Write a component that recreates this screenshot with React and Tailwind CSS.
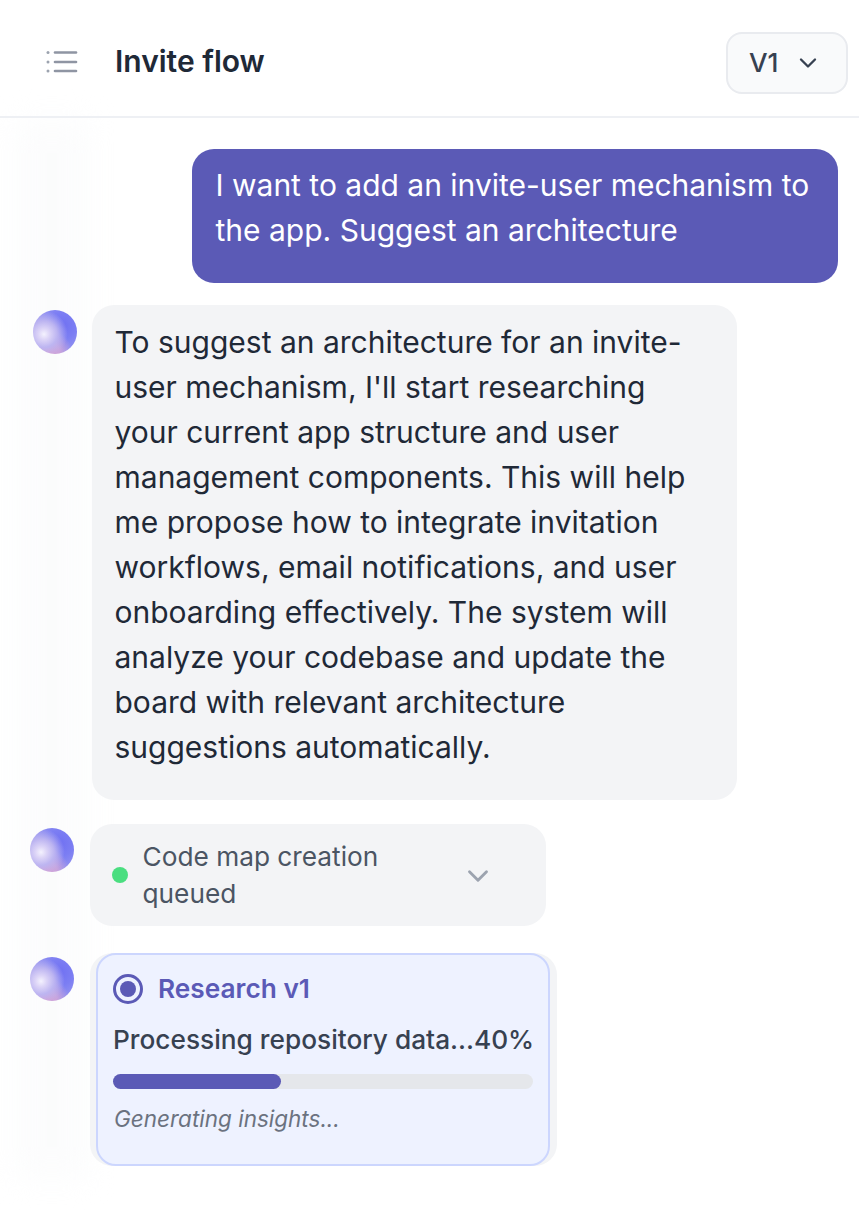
import { ChevronDown } from "lucide-react";

function Orb({ className = "" }) {
  return (
    <div
      className={`w-[44px] h-[44px] shrink-0 rounded-full bg-[radial-gradient(circle_at_25%_55%,#f4f2fe_0%,#dcd4f7_14%,#bdb5f1_32%,transparent_58%),radial-gradient(circle_at_35%_100%,#d99fd0_0%,#c9a4dc_22%,transparent_46%),radial-gradient(circle_at_68%_35%,#7071f2_0%,#7c7ef3_32%,#9292f0_62%,#ada4ea_100%)] ${className}`}
    />
  );
}

export default function App() {
  return (
    <div className="relative w-[859px] h-[1210px] bg-white overflow-hidden text-[#1f2937] font-['Inter',sans-serif]">
      <div className="absolute left-[14px] top-[120px] w-[76px] h-[1060px] bg-[#f9fafb] opacity-50 blur-[14px]" />

      <div className="relative flex items-center h-[118px] pt-[8px] pl-[46px] pr-[11px] border-b-2 border-[#eef0f4]">
        <svg width="32" height="24" viewBox="0 0 32 24" fill="none" className="shrink-0">
          <g fill="#9ca3af">
            <circle cx="2" cy="2.5" r="1.5" />
            <circle cx="2" cy="12" r="1.5" />
            <circle cx="2" cy="21" r="1.5" />
          </g>
          <g stroke="#8f95a3" strokeWidth="2.6" strokeLinecap="round">
            <path d="M9 2.5H30" />
            <path d="M9 12H30" />
            <path d="M9 21H30" />
          </g>
        </svg>
        <h1 className="ml-[37px] mb-[2px] text-[30px] font-semibold">Invite flow</h1>
        <button className="ml-auto mt-[2px] flex items-center w-[122px] h-[62px] pl-[21px] rounded-[16px] border-2 border-[#e9ebef] bg-[#f9fafb] text-[#374151] text-[26.25px] font-medium">
          V1
          <ChevronDown className="ml-[15px] text-[#374151]" size={28} strokeWidth={2} />
        </button>
      </div>

      <div className="relative flex flex-col">
        <div className="self-end mt-[31px] mr-[21px] w-[646px] h-[134px] pl-[23.5px] pr-[24px] py-[14px] rounded-[22px] bg-[#5b5ab6] text-white text-[30px] leading-[45px]">
          I want to add an invite-user mechanism to the app. Suggest an architecture
        </div>

        <div className="flex items-start mt-[22px] pl-[33px]">
          <Orb className="mt-[5px]" />
          <div className="ml-[15px] w-[645px] h-[495px] pl-[22.5px] pr-[23px] py-[15px] rounded-[22px] bg-[#f3f4f6] text-[30px] leading-[45px]">
            To suggest an architecture for an invite-user mechanism, I'll start researching your current app structure and user management components. This will help me propose how to integrate invitation workflows, email notifications, and user onboarding effectively. The system will analyze your codebase and update the board with relevant architecture suggestions automatically.
          </div>
        </div>

        <div className="flex items-start mt-[24px] pl-[30px]">
          <Orb className="mt-[4px]" />
          <div className="ml-[16px] flex items-center w-[456px] h-[102px] pl-[22px] rounded-[22px] bg-[#f3f4f6] text-[#4b5563] text-[26.25px] leading-[37px]">
            <span className="w-[16px] h-[16px] shrink-0 rounded-full bg-[#4ade80]" />
            <span className="ml-[14.5px] w-[290px]">Code map creation queued</span>
            <ChevronDown className="ml-[28.5px] mt-[1px] text-[#9ca3af]" size={34} strokeWidth={2} />
          </div>
        </div>

        <div className="flex items-start mt-[27px] pl-[30px]">
          <Orb className="mt-[4px]" />
          <div className="ml-[16px] w-[467px] h-[213px] pl-[6px] pr-[7px] rounded-[22px] bg-[#f3f4f6]">
            <div className="h-[213px] px-[15px] pt-[16px] rounded-[20px] border-2 border-[#ccd6fe] bg-[#eef2ff]">
              <div className="flex items-center h-[36px]">
                <svg width="30" height="30" viewBox="0 0 30 30" fill="none" className="shrink-0">
                  <circle cx="15" cy="15" r="13.5" stroke="#5b5ab6" strokeWidth="3" />
                  <circle cx="15" cy="15" r="8" fill="#5b5ab6" />
                </svg>
                <span className="ml-[15px] text-[26.25px] font-semibold text-[#5b5ab6]">Research v1</span>
              </div>
              <div className="mt-[16px] text-[26.25px] leading-[34px] font-medium text-[#374151] whitespace-nowrap">Processing repository data...40%</div>
              <div className="mt-[17px] h-[15px] rounded-full bg-[#e5e7eb]">
                <div className="h-full w-[40%] rounded-full bg-[#5b5ab6]" />
              </div>
              <div className="mt-[15px] ml-[1px] text-[22.5px] leading-[30px] italic text-[#6b7280]">Generating insights...</div>
            </div>
          </div>
        </div>
      </div>
    </div>
  );
}
